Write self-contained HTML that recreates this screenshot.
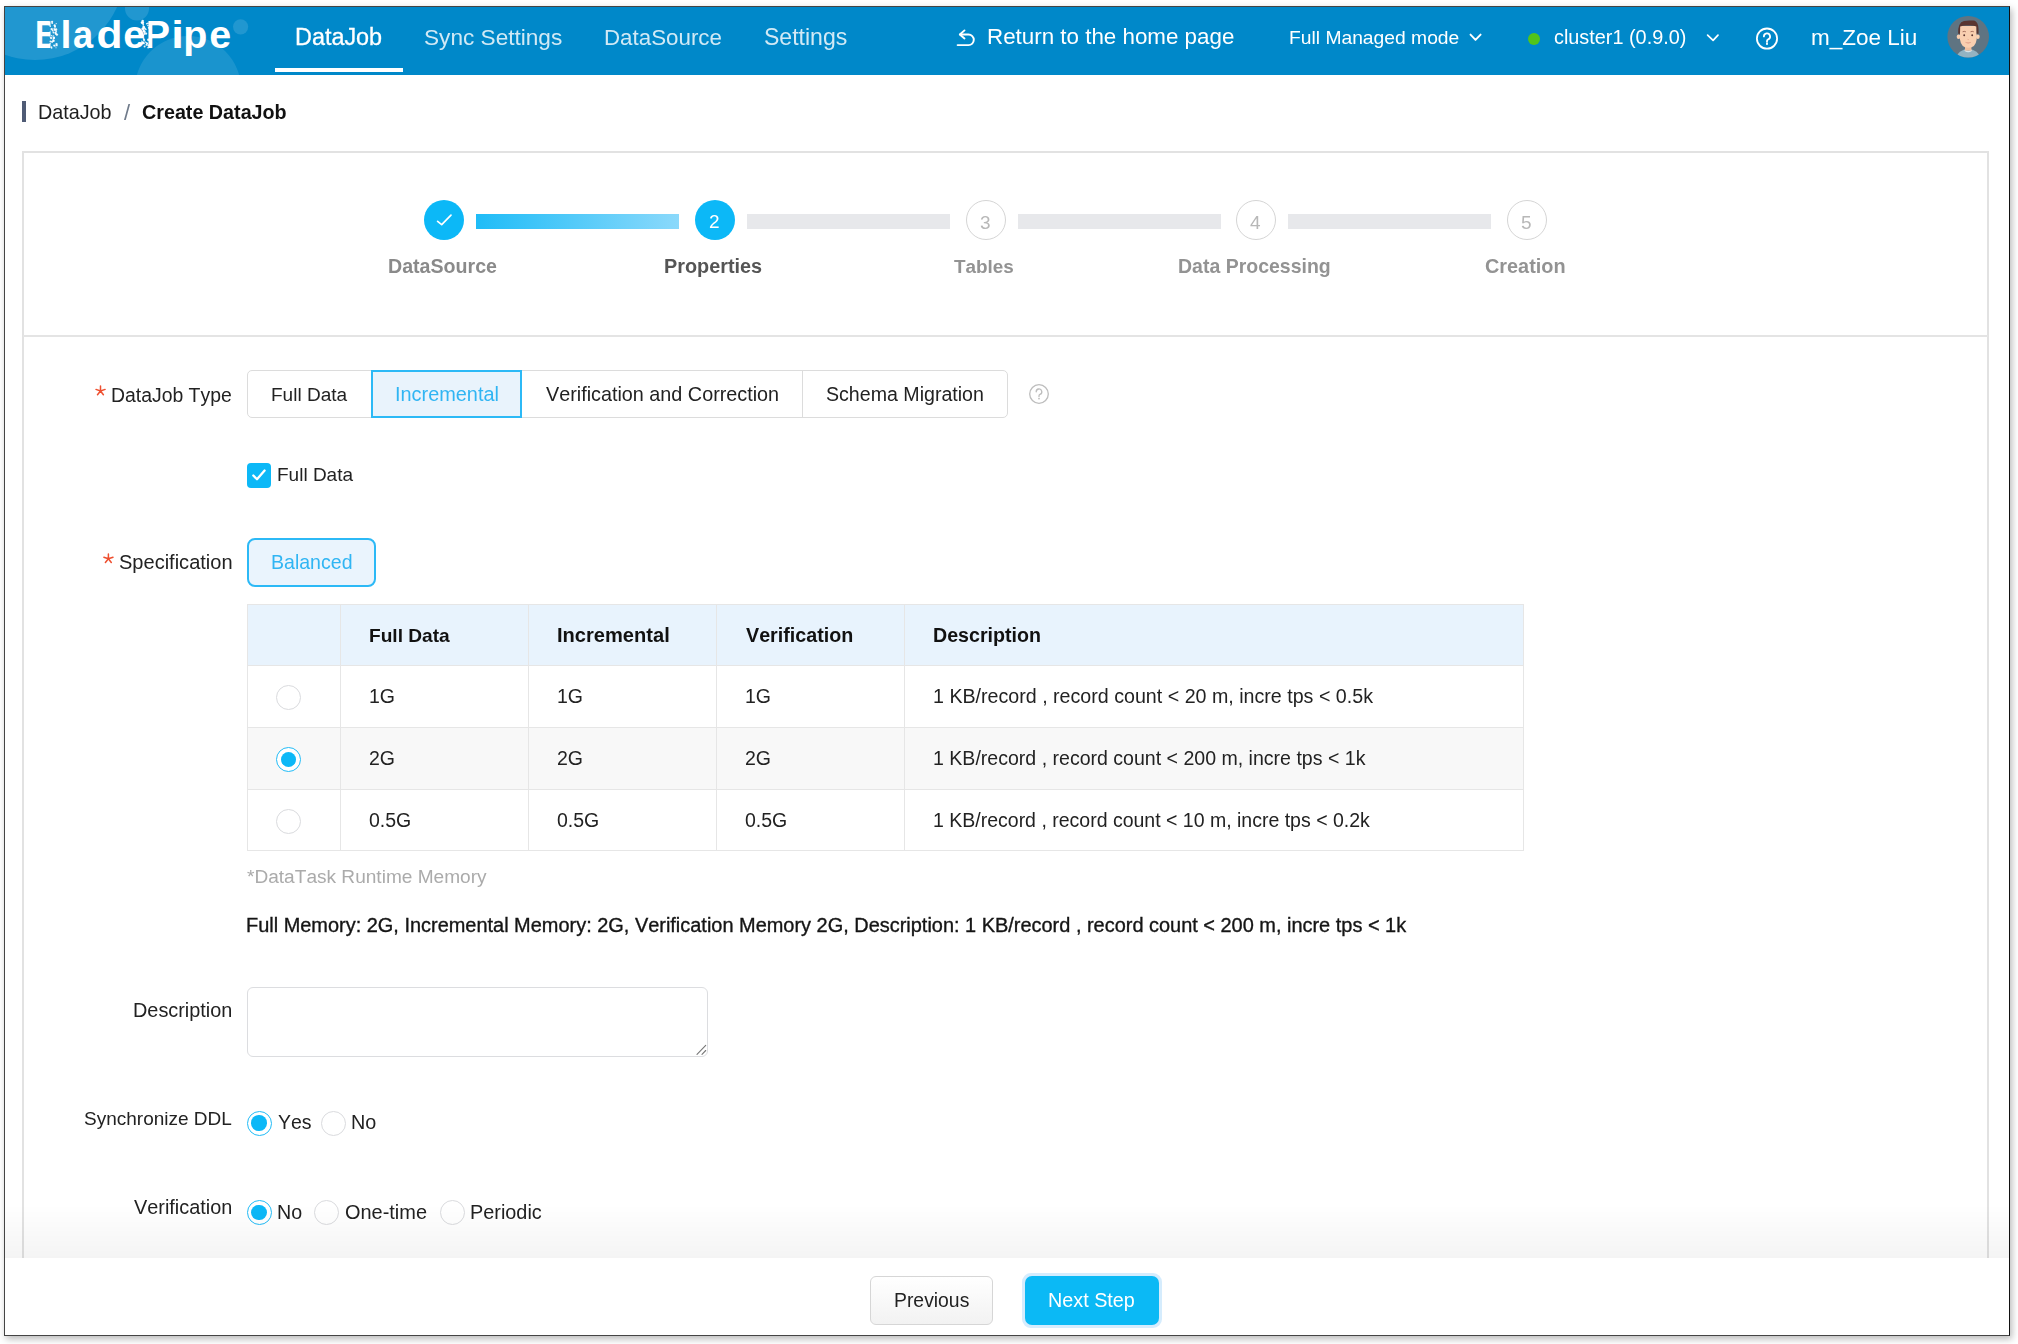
<!DOCTYPE html>
<html><head><meta charset="utf-8"><style>
html,body{margin:0;padding:0;}
body{width:2018px;height:1344px;position:relative;overflow:hidden;background:#fff;font-family:"Liberation Sans",sans-serif;}
.t{position:absolute;white-space:nowrap;line-height:1;font-kerning:none;will-change:transform;}
</style></head><body>
<div style="position:absolute;left:4.00px;top:6.00px;width:2006.00px;height:1330.00px;box-sizing:border-box;background:#fff;box-shadow:2px 3px 7px rgba(0,0,0,0.28);"></div>
<div style="position:absolute;left:5px;top:7px;width:2004px;height:68px;background:#0088c9;overflow:hidden;"><svg width="300" height="68" style="position:absolute;left:0;top:0" viewBox="5 7 300 68"><circle cx="35" cy="-30" r="90" fill="#fff" fill-opacity="0.13"/><circle cx="137" cy="8.5" r="12" fill="#fff" fill-opacity="0.13"/><circle cx="240.6" cy="26.8" r="7.6" fill="#fff" fill-opacity="0.13"/><circle cx="188" cy="89" r="53" fill="#fff" fill-opacity="0.10"/></svg></div>
<svg style="position:absolute;left:0;top:0" width="260" height="76" viewBox="0 0 260 76"><defs><clipPath id="cb"><rect x="30" y="0" width="20.5" height="76"/></clipPath><clipPath id="cp"><rect x="148.5" y="0" width="40" height="76"/></clipPath></defs><g clip-path="url(#cb)"><text transform="translate(35.09,48) scale(0.84,1)" font-family="Liberation Sans" font-weight="700" font-size="39.4" fill="#fff">B</text></g><g><text transform="translate(60.45,48) scale(1.0,1)" font-family="Liberation Sans" font-weight="700" font-size="39.4" fill="#fff">l</text></g><g><text transform="translate(72.94,48) scale(0.92,1)" font-family="Liberation Sans" font-weight="700" font-size="39.4" fill="#fff">a</text></g><g><text transform="translate(96.55,48) scale(1.08,1)" font-family="Liberation Sans" font-weight="700" font-size="39.4" fill="#fff">d</text></g><g><text transform="translate(123.26,48) scale(1.0,1)" font-family="Liberation Sans" font-weight="700" font-size="39.4" fill="#fff">e</text></g><g clip-path="url(#cp)"><text transform="translate(143.86,48) scale(1.0,1)" font-family="Liberation Sans" font-weight="700" font-size="39.4" fill="#fff">P</text></g><g><text transform="translate(171.14,48) scale(1.15,1)" font-family="Liberation Sans" font-weight="700" font-size="39.4" fill="#fff">i</text></g><g><text transform="translate(183.30,48) scale(1.0,1)" font-family="Liberation Sans" font-weight="700" font-size="39.4" fill="#fff">p</text></g><g><text transform="translate(209.36,48) scale(1.0,1)" font-family="Liberation Sans" font-weight="700" font-size="39.4" fill="#fff">e</text></g><circle cx="51.7" cy="35.7" r="0.76" fill="#fff" fill-opacity="0.9"/><circle cx="54.2" cy="37.9" r="0.55" fill="#fff" fill-opacity="0.9"/><circle cx="50.1" cy="43.6" r="0.68" fill="#fff" fill-opacity="0.9"/><circle cx="51.6" cy="47.9" r="0.83" fill="#fff" fill-opacity="0.9"/><circle cx="55.9" cy="33.9" r="0.95" fill="#fff" fill-opacity="0.9"/><circle cx="51.1" cy="38.1" r="1.11" fill="#fff" fill-opacity="0.9"/><circle cx="53.7" cy="41.0" r="0.97" fill="#fff" fill-opacity="0.9"/><circle cx="50.4" cy="41.5" r="0.91" fill="#fff" fill-opacity="0.9"/><circle cx="52.1" cy="21.8" r="1.11" fill="#fff" fill-opacity="0.9"/><circle cx="53.3" cy="40.4" r="1.12" fill="#fff" fill-opacity="0.9"/><circle cx="55.0" cy="45.9" r="0.78" fill="#fff" fill-opacity="0.9"/><circle cx="55.6" cy="33.0" r="1.15" fill="#fff" fill-opacity="0.9"/><circle cx="56.2" cy="23.6" r="0.60" fill="#fff" fill-opacity="0.9"/><circle cx="51.5" cy="47.1" r="0.81" fill="#fff" fill-opacity="0.9"/><circle cx="54.4" cy="29.1" r="0.86" fill="#fff" fill-opacity="0.9"/><circle cx="52.7" cy="30.5" r="0.91" fill="#fff" fill-opacity="0.9"/><circle cx="54.1" cy="45.4" r="0.98" fill="#fff" fill-opacity="0.9"/><circle cx="56.5" cy="44.1" r="1.19" fill="#fff" fill-opacity="0.9"/><circle cx="54.7" cy="25.4" r="1.10" fill="#fff" fill-opacity="0.9"/><circle cx="56.8" cy="45.4" r="0.90" fill="#fff" fill-opacity="0.9"/><circle cx="55.0" cy="26.7" r="1.08" fill="#fff" fill-opacity="0.9"/><circle cx="54.0" cy="28.7" r="0.54" fill="#fff" fill-opacity="0.9"/><circle cx="56.0" cy="47.7" r="0.56" fill="#fff" fill-opacity="0.9"/><circle cx="55.6" cy="32.1" r="0.61" fill="#fff" fill-opacity="0.9"/><circle cx="52.1" cy="41.8" r="1.11" fill="#fff" fill-opacity="0.9"/><circle cx="50.3" cy="37.6" r="0.53" fill="#fff" fill-opacity="0.9"/><circle cx="55.0" cy="29.9" r="1.12" fill="#fff" fill-opacity="0.9"/><circle cx="56.9" cy="34.6" r="1.20" fill="#fff" fill-opacity="0.9"/><circle cx="52.2" cy="23.1" r="0.92" fill="#fff" fill-opacity="0.9"/><circle cx="50.2" cy="26.3" r="0.79" fill="#fff" fill-opacity="0.9"/><circle cx="54.3" cy="25.2" r="0.53" fill="#fff" fill-opacity="0.9"/><circle cx="56.1" cy="29.5" r="1.17" fill="#fff" fill-opacity="0.9"/><circle cx="56.3" cy="31.2" r="0.82" fill="#fff" fill-opacity="0.9"/><circle cx="53.6" cy="38.4" r="0.92" fill="#fff" fill-opacity="0.9"/><circle cx="53.9" cy="37.7" r="1.16" fill="#fff" fill-opacity="0.9"/><circle cx="53.5" cy="32.6" r="1.00" fill="#fff" fill-opacity="0.9"/><circle cx="51.7" cy="29.1" r="1.18" fill="#fff" fill-opacity="0.9"/><circle cx="53.6" cy="35.8" r="0.51" fill="#fff" fill-opacity="0.9"/><circle cx="52.9" cy="36.7" r="0.51" fill="#fff" fill-opacity="0.9"/><circle cx="54.3" cy="38.1" r="0.54" fill="#fff" fill-opacity="0.9"/><circle cx="146.2" cy="33.6" r="1.04" fill="#fff" fill-opacity="0.9"/><circle cx="144.1" cy="40.1" r="1.09" fill="#fff" fill-opacity="0.9"/><circle cx="141.7" cy="22.6" r="1.04" fill="#fff" fill-opacity="0.9"/><circle cx="148.7" cy="27.8" r="0.87" fill="#fff" fill-opacity="0.9"/><circle cx="145.9" cy="29.6" r="0.79" fill="#fff" fill-opacity="0.9"/><circle cx="143.8" cy="31.0" r="0.98" fill="#fff" fill-opacity="0.9"/><circle cx="143.8" cy="31.2" r="1.12" fill="#fff" fill-opacity="0.9"/><circle cx="141.7" cy="36.4" r="1.09" fill="#fff" fill-opacity="0.9"/><circle cx="143.8" cy="27.0" r="1.14" fill="#fff" fill-opacity="0.9"/><circle cx="143.3" cy="26.1" r="0.85" fill="#fff" fill-opacity="0.9"/><circle cx="146.7" cy="23.7" r="0.76" fill="#fff" fill-opacity="0.9"/><circle cx="144.0" cy="43.5" r="0.85" fill="#fff" fill-opacity="0.9"/><circle cx="147.9" cy="25.6" r="0.77" fill="#fff" fill-opacity="0.9"/><circle cx="146.4" cy="44.9" r="0.86" fill="#fff" fill-opacity="0.9"/><circle cx="143.2" cy="24.3" r="0.92" fill="#fff" fill-opacity="0.9"/><circle cx="142.9" cy="42.8" r="1.17" fill="#fff" fill-opacity="0.9"/><circle cx="142.9" cy="28.5" r="1.15" fill="#fff" fill-opacity="0.9"/><circle cx="146.3" cy="42.8" r="0.78" fill="#fff" fill-opacity="0.9"/><circle cx="142.5" cy="28.9" r="1.14" fill="#fff" fill-opacity="0.9"/><circle cx="143.5" cy="30.4" r="0.83" fill="#fff" fill-opacity="0.9"/><circle cx="144.6" cy="32.1" r="1.24" fill="#fff" fill-opacity="0.9"/><circle cx="142.7" cy="21.1" r="1.25" fill="#fff" fill-opacity="0.9"/><circle cx="148.1" cy="47.6" r="0.85" fill="#fff" fill-opacity="0.9"/><circle cx="148.6" cy="46.0" r="0.68" fill="#fff" fill-opacity="0.9"/><circle cx="147.1" cy="43.6" r="1.03" fill="#fff" fill-opacity="0.9"/><circle cx="145.4" cy="28.8" r="0.77" fill="#fff" fill-opacity="0.9"/><circle cx="143.2" cy="22.8" r="0.97" fill="#fff" fill-opacity="0.9"/><circle cx="143.7" cy="42.9" r="0.54" fill="#fff" fill-opacity="0.9"/><circle cx="148.3" cy="39.7" r="1.24" fill="#fff" fill-opacity="0.9"/><circle cx="148.2" cy="45.3" r="0.96" fill="#fff" fill-opacity="0.9"/><circle cx="141.6" cy="41.1" r="0.64" fill="#fff" fill-opacity="0.9"/><circle cx="143.7" cy="38.9" r="0.92" fill="#fff" fill-opacity="0.9"/><circle cx="144.6" cy="46.4" r="0.99" fill="#fff" fill-opacity="0.9"/><circle cx="144.1" cy="27.8" r="1.19" fill="#fff" fill-opacity="0.9"/><circle cx="145.1" cy="42.1" r="0.78" fill="#fff" fill-opacity="0.9"/><circle cx="143.0" cy="35.4" r="1.15" fill="#fff" fill-opacity="0.9"/><circle cx="142.8" cy="42.4" r="1.24" fill="#fff" fill-opacity="0.9"/><circle cx="147.5" cy="43.2" r="0.51" fill="#fff" fill-opacity="0.9"/><circle cx="146.2" cy="44.3" r="0.54" fill="#fff" fill-opacity="0.9"/><circle cx="143.5" cy="28.3" r="0.92" fill="#fff" fill-opacity="0.9"/><circle cx="144.7" cy="33.8" r="1.12" fill="#fff" fill-opacity="0.9"/><circle cx="141.5" cy="22.5" r="0.60" fill="#fff" fill-opacity="0.9"/><circle cx="142.4" cy="22.8" r="1.28" fill="#fff" fill-opacity="0.9"/><circle cx="147.9" cy="23.3" r="0.90" fill="#fff" fill-opacity="0.9"/><circle cx="143.9" cy="29.5" r="0.78" fill="#fff" fill-opacity="0.9"/></svg>
<div class="t" style="left:294.88px;top:26.00px;font-size:23.39px;color:#fff;-webkit-text-stroke:0.3px #fff;">DataJob</div>
<div style="position:absolute;left:275.00px;top:68.00px;width:128.00px;height:4.00px;box-sizing:border-box;background:#fff;"></div>
<div class="t" style="left:423.97px;top:27.00px;font-size:22.61px;color:rgba(255,255,255,0.82);">Sync Settings</div>
<div class="t" style="left:603.87px;top:27.00px;font-size:22.33px;color:rgba(255,255,255,0.82);">DataSource</div>
<div class="t" style="left:763.55px;top:26.00px;font-size:23.05px;color:rgba(255,255,255,0.82);">Settings</div>
<svg style="position:absolute;left:950px;top:22px" width="30" height="30" viewBox="0 0 30 30"><path d="M14.5 8.4 L9.8 12.5 L14.5 16.5" fill="none" stroke="#fff" stroke-width="1.9" stroke-linecap="round" stroke-linejoin="round"/><path d="M10.2 12.5 H18.5 A5.3 5.3 0 0 1 18.5 23.1 H7.6" fill="none" stroke="#fff" stroke-width="1.9" stroke-linecap="round"/></svg>
<div class="t" style="left:986.76px;top:26.00px;font-size:22.37px;color:#fff;">Return to the home page</div>
<div class="t" style="left:1289.42px;top:28.00px;font-size:19.28px;color:#fff;">Full Managed mode</div>
<svg style="position:absolute;left:1464px;top:25px" width="22" height="20" viewBox="0 0 22 20"><path d="M6.5 9.6 L11.5 14.9 L16.6 9.6" fill="none" stroke="#fff" stroke-width="1.9" stroke-linecap="round" stroke-linejoin="round"/></svg>
<div style="position:absolute;left:1528.00px;top:32.70px;width:12.00px;height:12.00px;box-sizing:border-box;border-radius:50%;background:#52c41a;"></div>
<div class="t" style="left:1554.16px;top:28.00px;font-size:19.85px;color:#fff;">cluster1 (0.9.0)</div>
<svg style="position:absolute;left:1700px;top:25px" width="22" height="20" viewBox="0 0 22 20"><path d="M7.6 10.1 L13.1 15.3 L18 10.1" fill="none" stroke="#fff" stroke-width="1.7" stroke-linecap="round" stroke-linejoin="round"/></svg>
<svg style="position:absolute;left:1754px;top:26px" width="26" height="26" viewBox="0 0 26 26"><circle cx="13" cy="12.6" r="10.1" fill="none" stroke="#fff" stroke-width="1.8"/><path d="M9.9 10.4 a3.1 3.1 0 1 1 4.3 2.9 c-0.8 0.35 -1.2 0.9 -1.2 1.7 v0.9" fill="none" stroke="#fff" stroke-width="1.8" stroke-linecap="round"/><circle cx="13" cy="17.9" r="1.05" fill="#fff"/></svg>
<div class="t" style="left:1810.51px;top:27.00px;font-size:22.50px;color:#fff;">m_Zoe Liu</div>
<svg style="position:absolute;left:1940px;top:12px" width="56" height="52" viewBox="0 0 56 52"><defs><clipPath id="av"><circle cx="28.2" cy="24.8" r="20.8"/></clipPath></defs><circle cx="28.2" cy="24.8" r="20.8" fill="#5f7482"/><g clip-path="url(#av)"><ellipse cx="28.2" cy="46" rx="11.6" ry="9" fill="#93b3c2"/><path d="M24.6 37.6 Q28.2 40.2 31.8 37.6 L31.8 39 Q28.2 41.5 24.6 39 Z" fill="#d8e4ea"/><rect x="25" y="33" width="6.4" height="5.6" fill="#efbf9f"/><ellipse cx="18.6" cy="24.8" rx="1.9" ry="2.3" fill="#f9cfb0"/><ellipse cx="37.8" cy="24.8" rx="1.9" ry="2.3" fill="#f9cfb0"/><path d="M20 14 L20 27.5 Q21 35.8 28.3 35.8 Q35.6 35.8 36.6 27.5 L36.6 14 Z" fill="#f9cfb0"/><path d="M18.2 21.8 Q17.6 10.5 24 9 Q28.5 8 32 8.6 Q34.8 8.2 35.8 9.4 Q39 11.5 38.6 21.8 L36.6 21.8 L36.4 14.5 Q33 13.2 28.2 13.6 Q23.4 13.2 20.2 14.6 L20 21.8 Z" fill="#5a3530"/><path d="M22.6 19.8 Q24.2 18.9 25.9 19.8 M30.5 19.8 Q32.2 18.9 33.8 19.8" fill="none" stroke="#a06a58" stroke-width="0.9"/><circle cx="24.2" cy="23.2" r="0.95" fill="#5a3530"/><circle cx="32.2" cy="23.2" r="0.95" fill="#5a3530"/><path d="M27.6 27.4 Q28.2 27.9 28.8 27.4" fill="none" stroke="#e3a58a" stroke-width="0.8"/><path d="M25.4 30.3 Q28.2 32.4 31 30.3" fill="#e8a893" stroke="#e0a088" stroke-width="0.6"/></g></svg>
<div style="position:absolute;left:22.20px;top:100.70px;width:4.20px;height:21.70px;box-sizing:border-box;background:#4f5b75;"></div>
<div class="t" style="left:38.08px;top:103.00px;font-size:19.75px;color:#1f1f1f;">DataJob</div>
<div class="t" style="left:123.70px;top:102.00px;font-size:22.00px;color:#6f7a8a;">/</div>
<div class="t" style="left:141.89px;top:103.00px;font-size:19.73px;color:#111;font-weight:700;">Create DataJob</div>
<div style="position:absolute;left:22.00px;top:151.00px;width:1967.00px;height:1185.00px;box-sizing:border-box;border:2px solid #e2e2e2;background:#fff;"></div>
<div style="position:absolute;left:23.00px;top:335.00px;width:1965.00px;height:2.00px;box-sizing:border-box;background:#e4e4e4;"></div>
<div style="position:absolute;left:476.00px;top:214.30px;width:203.00px;height:15.00px;box-sizing:border-box;background:linear-gradient(90deg,#1fbcf7,#8bd9fb);"></div>
<div style="position:absolute;left:747.00px;top:214.30px;width:203.00px;height:15.00px;box-sizing:border-box;background:#e7e8eb;"></div>
<div style="position:absolute;left:1018.00px;top:214.30px;width:203.00px;height:15.00px;box-sizing:border-box;background:#e7e8eb;"></div>
<div style="position:absolute;left:1288.00px;top:214.30px;width:203.00px;height:15.00px;box-sizing:border-box;background:#e7e8eb;"></div>
<div style="position:absolute;left:423.70px;top:200.00px;width:40.00px;height:40.00px;box-sizing:border-box;border-radius:50%;background:#0cb8f7;"></div>
<div style="position:absolute;left:694.70px;top:200.00px;width:40.00px;height:40.00px;box-sizing:border-box;border-radius:50%;background:#0cb8f7;"></div>
<div style="position:absolute;left:965.80px;top:200.00px;width:40.00px;height:40.00px;box-sizing:border-box;border-radius:50%;border:1.5px solid #d5d5d5;background:#fff;"></div>
<div style="position:absolute;left:1236.40px;top:200.00px;width:40.00px;height:40.00px;box-sizing:border-box;border-radius:50%;border:1.5px solid #d5d5d5;background:#fff;"></div>
<div style="position:absolute;left:1506.70px;top:200.00px;width:40.00px;height:40.00px;box-sizing:border-box;border-radius:50%;border:1.5px solid #d5d5d5;background:#fff;"></div>
<svg style="position:absolute;left:433.7px;top:210px" width="20" height="20" viewBox="0 0 20 20"><path d="M3.6 11.3 L7.7 14.6 L17 5.2" fill="none" stroke="#fff" stroke-width="1.7" stroke-linecap="round" stroke-linejoin="round"/></svg>
<div class="t" style="left:708.74px;top:212.00px;font-size:19.00px;color:#fff;">2</div>
<div class="t" style="left:980.18px;top:213.00px;font-size:19.00px;color:#b8b8b8;">3</div>
<div class="t" style="left:1250.26px;top:213.00px;font-size:19.00px;color:#b8b8b8;">4</div>
<div class="t" style="left:1521.24px;top:213.00px;font-size:19.00px;color:#b8b8b8;">5</div>
<div class="t" style="left:388.09px;top:257.00px;font-size:19.61px;color:#8a8a8a;font-weight:700;">DataSource</div>
<div class="t" style="left:663.67px;top:257.00px;font-size:19.84px;color:#555;font-weight:700;">Properties</div>
<div class="t" style="left:954.49px;top:258.00px;font-size:18.90px;color:#939393;font-weight:700;">Tables</div>
<div class="t" style="left:1178.40px;top:257.00px;font-size:19.49px;color:#939393;font-weight:700;">Data Processing</div>
<div class="t" style="left:1485.18px;top:257.00px;font-size:19.88px;color:#939393;font-weight:700;">Creation</div>
<svg style="position:absolute;left:0;top:0;overflow:visible" width="1" height="1"><path d="M100.50 391.00 L100.50 386.10 M100.50 391.00 L96.00 389.40 M100.50 391.00 L105.10 389.40 M100.50 391.00 L97.50 394.70 M100.50 391.00 L103.40 394.70" stroke="#ee4f2f" stroke-width="1.5" stroke-linecap="round" fill="none"/></svg>
<div class="t" style="left:111.11px;top:386.00px;font-size:19.40px;color:#222;">DataJob Type</div>
<div style="position:absolute;left:247.40px;top:369.70px;width:760.20px;height:48.70px;box-sizing:border-box;border:1.5px solid #dcdcdc;border-radius:5px;background:#fff;"></div>
<div style="position:absolute;left:802.30px;top:370.50px;width:1.20px;height:47.10px;box-sizing:border-box;background:#dcdcdc;"></div>
<div style="position:absolute;left:370.80px;top:369.70px;width:151.60px;height:48.70px;box-sizing:border-box;border:2px solid #2cb9f6;background:#e9f3fc;"></div>
<div class="t" style="left:270.84px;top:385.00px;font-size:19.03px;color:#222;">Full Data</div>
<div class="t" style="left:394.56px;top:385.00px;font-size:19.90px;color:#30b5f3;">Incremental</div>
<div class="t" style="left:546.11px;top:385.00px;font-size:19.80px;color:#222;">Verification and Correction</div>
<div class="t" style="left:826.31px;top:385.00px;font-size:19.60px;color:#222;">Schema Migration</div>
<svg style="position:absolute;left:1028px;top:383px" width="22" height="22" viewBox="0 0 22 22"><circle cx="11" cy="11" r="9.3" fill="none" stroke="#bdbdbd" stroke-width="1.3"/><path d="M8.2 8.8 a2.8 2.8 0 1 1 3.8 2.6 c-0.7 0.3 -1 0.8 -1 1.5 v0.6" fill="none" stroke="#bdbdbd" stroke-width="1.3" stroke-linecap="round"/><circle cx="11" cy="15.6" r="0.9" fill="#bdbdbd"/></svg>
<div style="position:absolute;left:246.80px;top:462.90px;width:24.50px;height:24.70px;box-sizing:border-box;border-radius:4px;background:#0cb8f7;"></div>
<svg style="position:absolute;left:246.8px;top:463px" width="25" height="25" viewBox="0 0 25 25"><path d="M6.3 12.5 L10 16.3 L17.6 7.5" fill="none" stroke="#fff" stroke-width="2.3" stroke-linecap="round" stroke-linejoin="round"/></svg>
<div class="t" style="left:277.44px;top:465.00px;font-size:19.01px;color:#222;">Full Data</div>
<svg style="position:absolute;left:0;top:0;overflow:visible" width="1" height="1"><path d="M108.40 558.80 L108.40 553.90 M108.40 558.80 L103.90 557.20 M108.40 558.80 L113.00 557.20 M108.40 558.80 L105.40 562.50 M108.40 558.80 L111.30 562.50" stroke="#ee4f2f" stroke-width="1.5" stroke-linecap="round" fill="none"/></svg>
<div class="t" style="left:119.09px;top:552.00px;font-size:20.04px;color:#222;">Specification</div>
<div style="position:absolute;left:246.80px;top:538.00px;width:129.20px;height:48.70px;box-sizing:border-box;border:2px solid #2cb9f6;border-radius:8px;background:#eaf4fd;"></div>
<div class="t" style="left:270.60px;top:553.00px;font-size:19.56px;color:#30b5f3;">Balanced</div>
<div style="position:absolute;left:247.10px;top:603.90px;width:1277.10px;height:246.90px;box-sizing:border-box;border:1.5px solid #e6e6e6;background:#fff;"></div>
<div style="position:absolute;left:248.00px;top:604.80px;width:1275.30px;height:60.50px;box-sizing:border-box;background:#e8f3fd;"></div>
<div style="position:absolute;left:248.00px;top:728.40px;width:1275.30px;height:61.00px;box-sizing:border-box;background:#f8f8f8;"></div>
<div style="position:absolute;left:248.00px;top:664.60px;width:1275.30px;height:1.40px;box-sizing:border-box;background:#e6e6e6;"></div>
<div style="position:absolute;left:248.00px;top:727.00px;width:1275.30px;height:1.40px;box-sizing:border-box;background:#e6e6e6;"></div>
<div style="position:absolute;left:248.00px;top:788.70px;width:1275.30px;height:1.40px;box-sizing:border-box;background:#e6e6e6;"></div>
<div style="position:absolute;left:339.90px;top:604.80px;width:1.40px;height:245.20px;box-sizing:border-box;background:#e6e6e6;"></div>
<div style="position:absolute;left:527.60px;top:604.80px;width:1.40px;height:245.20px;box-sizing:border-box;background:#e6e6e6;"></div>
<div style="position:absolute;left:715.60px;top:604.80px;width:1.40px;height:245.20px;box-sizing:border-box;background:#e6e6e6;"></div>
<div style="position:absolute;left:903.60px;top:604.80px;width:1.40px;height:245.20px;box-sizing:border-box;background:#e6e6e6;"></div>
<div class="t" style="left:368.92px;top:626.00px;font-size:19.12px;color:#111;font-weight:700;">Full Data</div>
<div class="t" style="left:556.66px;top:625.00px;font-size:20.09px;color:#111;font-weight:700;">Incremental</div>
<div class="t" style="left:745.87px;top:626.00px;font-size:19.71px;color:#111;font-weight:700;">Verification</div>
<div class="t" style="left:932.69px;top:626.00px;font-size:19.64px;color:#111;font-weight:700;">Description</div>
<div style="position:absolute;left:275.70px;top:685.00px;width:25.00px;height:25.00px;box-sizing:border-box;border-radius:50%;border:1.5px solid #dadbde;background:#fff;"></div>
<div class="t" style="left:368.71px;top:687.00px;font-size:19.50px;color:#222;">1G</div>
<div class="t" style="left:556.51px;top:687.00px;font-size:19.50px;color:#222;">1G</div>
<div class="t" style="left:744.51px;top:687.00px;font-size:19.50px;color:#222;">1G</div>
<div class="t" style="left:932.50px;top:687.00px;font-size:19.65px;color:#222;">1 KB/record , record count &lt; 20 m, incre tps &lt; 0.5k</div>
<div style="position:absolute;left:275.70px;top:747.30px;width:25.00px;height:25.00px;box-sizing:border-box;border-radius:50%;border:1.7px solid #22bcf7;background:#fff;"></div>
<div style="position:absolute;left:280.50px;top:752.10px;width:15.40px;height:15.40px;box-sizing:border-box;border-radius:50%;background:#0cb8f7;"></div>
<div class="t" style="left:369.22px;top:749.00px;font-size:19.50px;color:#222;">2G</div>
<div class="t" style="left:557.02px;top:749.00px;font-size:19.50px;color:#222;">2G</div>
<div class="t" style="left:745.02px;top:749.00px;font-size:19.50px;color:#222;">2G</div>
<div class="t" style="left:932.51px;top:749.00px;font-size:19.56px;color:#222;">1 KB/record , record count &lt; 200 m, incre tps &lt; 1k</div>
<div style="position:absolute;left:275.70px;top:809.10px;width:25.00px;height:25.00px;box-sizing:border-box;border-radius:50%;border:1.5px solid #dadbde;background:#fff;"></div>
<div class="t" style="left:369.44px;top:811.00px;font-size:19.50px;color:#222;">0.5G</div>
<div class="t" style="left:557.24px;top:811.00px;font-size:19.50px;color:#222;">0.5G</div>
<div class="t" style="left:745.24px;top:811.00px;font-size:19.50px;color:#222;">0.5G</div>
<div class="t" style="left:932.51px;top:811.00px;font-size:19.50px;color:#222;">1 KB/record , record count &lt; 10 m, incre tps &lt; 0.2k</div>
<div class="t" style="left:246.99px;top:867.00px;font-size:19.08px;color:#ababab;">*DataTask Runtime Memory</div>
<div class="t" style="left:245.66px;top:916.00px;font-size:19.95px;color:#151515;-webkit-text-stroke:0.35px #151515;">Full Memory: 2G, Incremental Memory: 2G, Verification Memory 2G, Description: 1 KB/record , record count &lt; 200 m, incre tps &lt; 1k</div>
<div class="t" style="left:132.97px;top:1001.00px;font-size:19.86px;color:#222;">Description</div>
<div style="position:absolute;left:247.30px;top:987.00px;width:461.20px;height:69.80px;box-sizing:border-box;border:1.5px solid #dcdde0;border-radius:6px;background:#fff;"></div>
<svg style="position:absolute;left:694px;top:1042px" width="14" height="14" viewBox="0 0 14 14"><path d="M3 12.3 L11.7 3.4 M8 12.3 L11.7 8.5" stroke="#777" stroke-width="1.1" stroke-linecap="round"/></svg>
<div class="t" style="left:84.04px;top:1109.00px;font-size:19.01px;color:#222;">Synchronize DDL</div>
<div style="position:absolute;left:246.60px;top:1110.50px;width:25.00px;height:25.00px;box-sizing:border-box;border-radius:50%;border:1.7px solid #22bcf7;background:#fff;"></div>
<div style="position:absolute;left:251.40px;top:1115.30px;width:15.40px;height:15.40px;box-sizing:border-box;border-radius:50%;background:#0cb8f7;"></div>
<div class="t" style="left:278.47px;top:1113.00px;font-size:19.50px;color:#222;">Yes</div>
<div style="position:absolute;left:320.50px;top:1110.50px;width:25.00px;height:25.00px;box-sizing:border-box;border-radius:50%;border:1.5px solid #dadbde;background:#fff;"></div>
<div class="t" style="left:350.58px;top:1113.00px;font-size:19.80px;color:#222;">No</div>
<div class="t" style="left:134.31px;top:1198.00px;font-size:19.87px;color:#222;">Verification</div>
<div style="position:absolute;left:246.60px;top:1199.90px;width:25.00px;height:25.00px;box-sizing:border-box;border-radius:50%;border:1.7px solid #22bcf7;background:#fff;"></div>
<div style="position:absolute;left:251.40px;top:1204.70px;width:15.40px;height:15.40px;box-sizing:border-box;border-radius:50%;background:#0cb8f7;"></div>
<div class="t" style="left:277.29px;top:1203.00px;font-size:19.67px;color:#222;">No</div>
<div style="position:absolute;left:314.10px;top:1199.90px;width:25.00px;height:25.00px;box-sizing:border-box;border-radius:50%;border:1.5px solid #dadbde;background:#fff;"></div>
<div class="t" style="left:345.35px;top:1203.00px;font-size:19.97px;color:#222;">One-time</div>
<div style="position:absolute;left:439.50px;top:1199.90px;width:25.00px;height:25.00px;box-sizing:border-box;border-radius:50%;border:1.5px solid #dadbde;background:#fff;"></div>
<div class="t" style="left:469.67px;top:1203.00px;font-size:19.86px;color:#222;">Periodic</div>
<div style="position:absolute;left:5.00px;top:1205.00px;width:2004.00px;height:52.50px;box-sizing:border-box;background:linear-gradient(180deg,rgba(0,0,0,0),rgba(0,0,0,0.045));"></div>
<div style="position:absolute;left:5.00px;top:1257.50px;width:2004.00px;height:77.50px;box-sizing:border-box;background:#fff;"></div>
<div style="position:absolute;left:870.30px;top:1276.20px;width:123.10px;height:48.50px;box-sizing:border-box;border:1.5px solid #d6d6d6;border-radius:6px;background:linear-gradient(180deg,#fff,#f2f2f2);"></div>
<div class="t" style="left:893.71px;top:1291.00px;font-size:19.38px;color:#222;">Previous</div>
<div style="position:absolute;left:1021.60px;top:1272.70px;width:140.70px;height:55.50px;box-sizing:border-box;border-radius:9px;background:#d5ecfd;"></div>
<div style="position:absolute;left:1024.60px;top:1275.70px;width:134.70px;height:49.50px;box-sizing:border-box;border-radius:7px;background:#0bb9f5;"></div>
<div class="t" style="left:1047.98px;top:1291.00px;font-size:19.78px;color:#fff;">Next Step</div>
<div style="position:absolute;left:4.00px;top:6.00px;width:2006.00px;height:1330.00px;box-sizing:border-box;border:1px solid #444;border-right-color:#111;"></div>
</body></html>
